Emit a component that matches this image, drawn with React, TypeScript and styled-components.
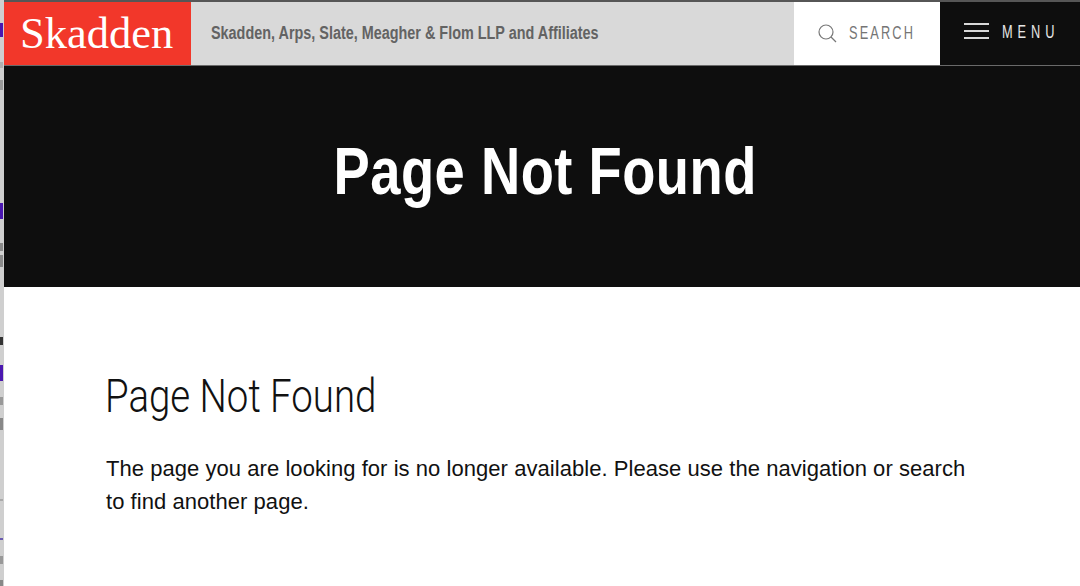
import React from 'react';
import styled, { createGlobalStyle } from 'styled-components';

const GlobalStyle = createGlobalStyle`
  html, body {
    margin: 0;
    padding: 0;
    background: #ffffff;
  }
  body {
    font-family: "Liberation Sans", Arial, sans-serif;
    overflow: hidden;
  }
`;

// bits of the window behind that show in the left sliver
const scraps = [
  { gap: 23, height: 14, color: '#4a17b0' },
  { gap: 25, height: 6, color: '#b0b0b0' },
  { gap: 12, height: 10, color: '#999999' },
  { gap: 113, height: 16, color: '#4a17b0' },
  { gap: 24, height: 8, color: '#888888' },
  { gap: 4, height: 12, color: '#8a8a8a' },
  { gap: 70, height: 8, color: '#333333' },
  { gap: 20, height: 16, color: '#4a17b0' },
  { gap: 16, height: 8, color: '#999999' },
  { gap: 13, height: 12, color: '#888888' },
  { gap: 69, height: 2, color: '#aaaaaa' },
  { gap: 37, height: 2, color: '#6a5ab0' },
  { gap: 16, height: 8, color: '#999999' },
  { gap: 16, height: 6, color: '#888888' },
];

function App() {
  return (
    <>
      <GlobalStyle />
      <Page>
        <BackWindow>
          {scraps.map((s, i) => (
            <Scrap key={i} $gap={s.gap} $height={s.height} $color={s.color} />
          ))}
        </BackWindow>
        <Main>
          <Header>
            <Logo>Skadden</Logo>
            <FirmName>
              <Condensed $scale={0.8}>Skadden, Arps, Slate, Meagher &amp; Flom LLP and Affiliates</Condensed>
            </FirmName>
            <SearchButton>
              <svg width="20" height="20" viewBox="0 0 20 20" fill="none" stroke="#777777" strokeWidth="1.2">
                <circle cx="8" cy="8" r="7" />
                <path d="M13 13l5 5" />
              </svg>
              <Condensed $scale={0.71}>SEARCH</Condensed>
            </SearchButton>
            <MenuButton>
              <Burger>
                <i />
                <i />
                <i />
              </Burger>
              <Condensed $scale={0.71}>MENU</Condensed>
            </MenuButton>
          </Header>
          <Hero>
            <h1>
              <Condensed $scale={0.823} $origin="center">
                Page Not Found
              </Condensed>
            </h1>
          </Hero>
          <Content>
            <h2>
              <Condensed $scale={0.835}>Page Not Found</Condensed>
            </h2>
            <p>
              The page you are looking for is no longer available. Please use the navigation or search to find another
              page.
            </p>
          </Content>
        </Main>
      </Page>
    </>
  );
}

// no condensed grotesque is installed, so squeeze the regular one
const Condensed = styled.span<{ $scale: number; $origin?: string }>`
  display: inline-block;
  white-space: nowrap;
  transform: scaleX(${(p) => p.$scale});
  transform-origin: ${(p) => p.$origin || 'left'} center;
`;

const Page = styled.div`
  display: flex;
  width: 1080px;
  height: 586px;
  overflow: hidden;
`;

const BackWindow = styled.div`
  display: flex;
  flex-direction: column;
  flex: 0 0 4px;
  background: #cfcfcf;
`;

const Scrap = styled.div<{ $gap: number; $height: number; $color: string }>`
  flex: none;
  margin-top: ${(p) => p.$gap}px;
  width: 3px;
  height: ${(p) => p.$height}px;
  background: ${(p) => p.$color};
`;

const Main = styled.div`
  flex: 1;
  min-width: 0;
  display: flex;
  flex-direction: column;
`;

const Header = styled.header`
  display: flex;
  height: 63px;
  border-top: 2px solid #565656;
  border-bottom: 1px solid #6a6a6a;
  background: #d9d9d9;
`;

const Logo = styled.div`
  flex: 0 0 187px;
  box-sizing: border-box;
  padding-left: 16px;
  background: #f2372a;
  color: #ffffff;
  font-family: "Liberation Serif", "Times New Roman", serif;
  font-size: 44.5px;
  line-height: 63px;
`;

const FirmName = styled.div`
  flex: 1;
  min-width: 0;
  padding-left: 20px;
  color: #636363;
  font-weight: 700;
  font-size: 18px;
  line-height: 62px;
`;

const SearchButton = styled.div`
  flex: 0 0 146px;
  min-width: 0;
  box-sizing: border-box;
  display: flex;
  align-items: center;
  padding-left: 24px;
  gap: 11px;
  background: #ffffff;
  color: #757575;
  font-size: 18px;
  letter-spacing: 3px;
  svg {
    flex: none;
  }
`;

const MenuButton = styled.div`
  flex: 0 0 140px;
  min-width: 0;
  box-sizing: border-box;
  display: flex;
  align-items: center;
  padding: 0 0 3px 24px;
  gap: 13px;
  background: #0e0e0e;
  color: #e6e6e6;
  font-size: 18px;
  letter-spacing: 7px;
`;

const Burger = styled.div`
  display: flex;
  flex-direction: column;
  gap: 5px;
  margin-bottom: 3px;
  i {
    display: block;
    width: 25px;
    height: 2px;
    background: #d8d8d8;
  }
`;

const Hero = styled.section`
  height: 221px;
  display: flex;
  align-items: center;
  justify-content: center;
  padding-left: 7px;
  background: #0e0e0e;
  h1 {
    margin: 0 0 12px;
    color: #ffffff;
    font-weight: 700;
    font-size: 66px;
    letter-spacing: 0.6px;
  }
`;

const Content = styled.section`
  padding: 79px 110px 0 101px;
  h2 {
    margin: 0;
    color: #111111;
    font-family: Roboto, "Liberation Sans", sans-serif;
    font-weight: 300;
    font-size: 46px;
    line-height: 60px;
  }
  p {
    margin: 26px 0 0 1px;
    color: #111111;
    font-size: 22px;
    letter-spacing: 0.05px;
    line-height: 33px;
  }
`;

export default App;
